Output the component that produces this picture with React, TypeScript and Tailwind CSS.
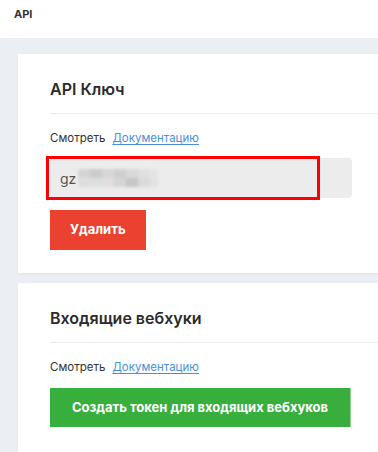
import React from 'react';

const DocLine: React.FC = () => (
  <div className="flex items-center gap-[7px] h-4 text-[11.5px] leading-4">
    <span className="text-[#333]">Смотреть</span>
    <a href="#" className="text-[#4a8fdb] underline underline-offset-2">Документацию</a>
  </div>
);

const CardTitle: React.FC<{ children: React.ReactNode }> = ({ children }) => (
  <>
    <h2 className="h-[22px] leading-[22px] text-[16px] font-semibold text-[#2b2b2b]">{children}</h2>
    <div className="mt-[13px] h-px bg-[#ececec]" />
  </>
);

export default function App() {
  return (
    <div className="w-[378px] h-[452px] overflow-hidden bg-[#ebeef3]" style={{ fontFamily: 'Inter, "Noto Sans", sans-serif' }}>
      {/* Top bar */}
      <div className="h-[38px] bg-white px-[14px] flex items-start pt-[6px]">
        <span className="text-[11px] font-bold text-[#333] leading-[16px]">API</span>
      </div>

      <div className="pl-[18px] pt-4 flex flex-col gap-[10px]">
        {/* API key card */}
        <div className="bg-white pl-8 pt-6 pb-[23px] shadow-[0_1px_3px_rgba(0,0,0,0.06)]">
          <CardTitle>API Ключ</CardTitle>
          <div className="mt-[16px]">
            <DocLine />
          </div>
          <div className="relative mt-3 w-[302px] h-10 rounded bg-[#ececec] flex items-center pl-[10px]">
            <span className="text-[14px] text-[#555]">gz</span>
            <div className="ml-[2px] flex flex-col blur-[1.5px] opacity-80">
              <div className="flex">
                <div className="w-3 h-[9px] bg-[#cfcfcf]" />
                <div className="w-3 h-[9px] bg-[#c4c4c4]" />
                <div className="w-3 h-[9px] bg-[#d2d2d2]" />
                <div className="w-3 h-[9px] bg-[#c9c9c9]" />
                <div className="w-3 h-[9px] bg-[#d5d5d5]" />
                <div className="w-3 h-[9px] bg-[#dedede]" />
                <div className="w-[8px] h-[9px] bg-[#e2e2e2]" />
              </div>
              <div className="flex">
                <div className="w-3 h-[9px] bg-[#dadada]" />
                <div className="w-3 h-[9px] bg-[#d8dde0]" />
                <div className="w-3 h-[9px] bg-[#dcdcdc]" />
                <div className="w-3 h-[9px] bg-[#d0d0d0]" />
                <div className="w-3 h-[9px] bg-[#bdbdbd]" />
                <div className="w-3 h-[9px] bg-[#d6d6d6]" />
                <div className="w-[8px] h-[9px] bg-[#e0e0e0]" />
              </div>
            </div>
            {/* annotation highlight */}
            <div className="absolute left-[-4px] top-[-2px] w-[274px] h-[44px] border-[3px] border-[#ff0000]" />
          </div>
          <button className="mt-3 h-10 px-5 bg-[#ea4130] text-white text-[13px] font-bold">Удалить</button>
        </div>

        {/* Incoming webhooks card */}
        <div className="bg-white pl-8 pt-6 pb-8 shadow-[0_1px_3px_rgba(0,0,0,0.06)]">
          <CardTitle>Входящие вебхуки</CardTitle>
          <div className="mt-[16px]">
            <DocLine />
          </div>
          <button className="mt-[13px] h-[39px] w-[301px] bg-[#38ae3c] border-r border-[#8fd291] text-white text-[13px] font-bold">
            Создать токен для входящих вебхуков
          </button>
        </div>
      </div>
    </div>
  );
}
